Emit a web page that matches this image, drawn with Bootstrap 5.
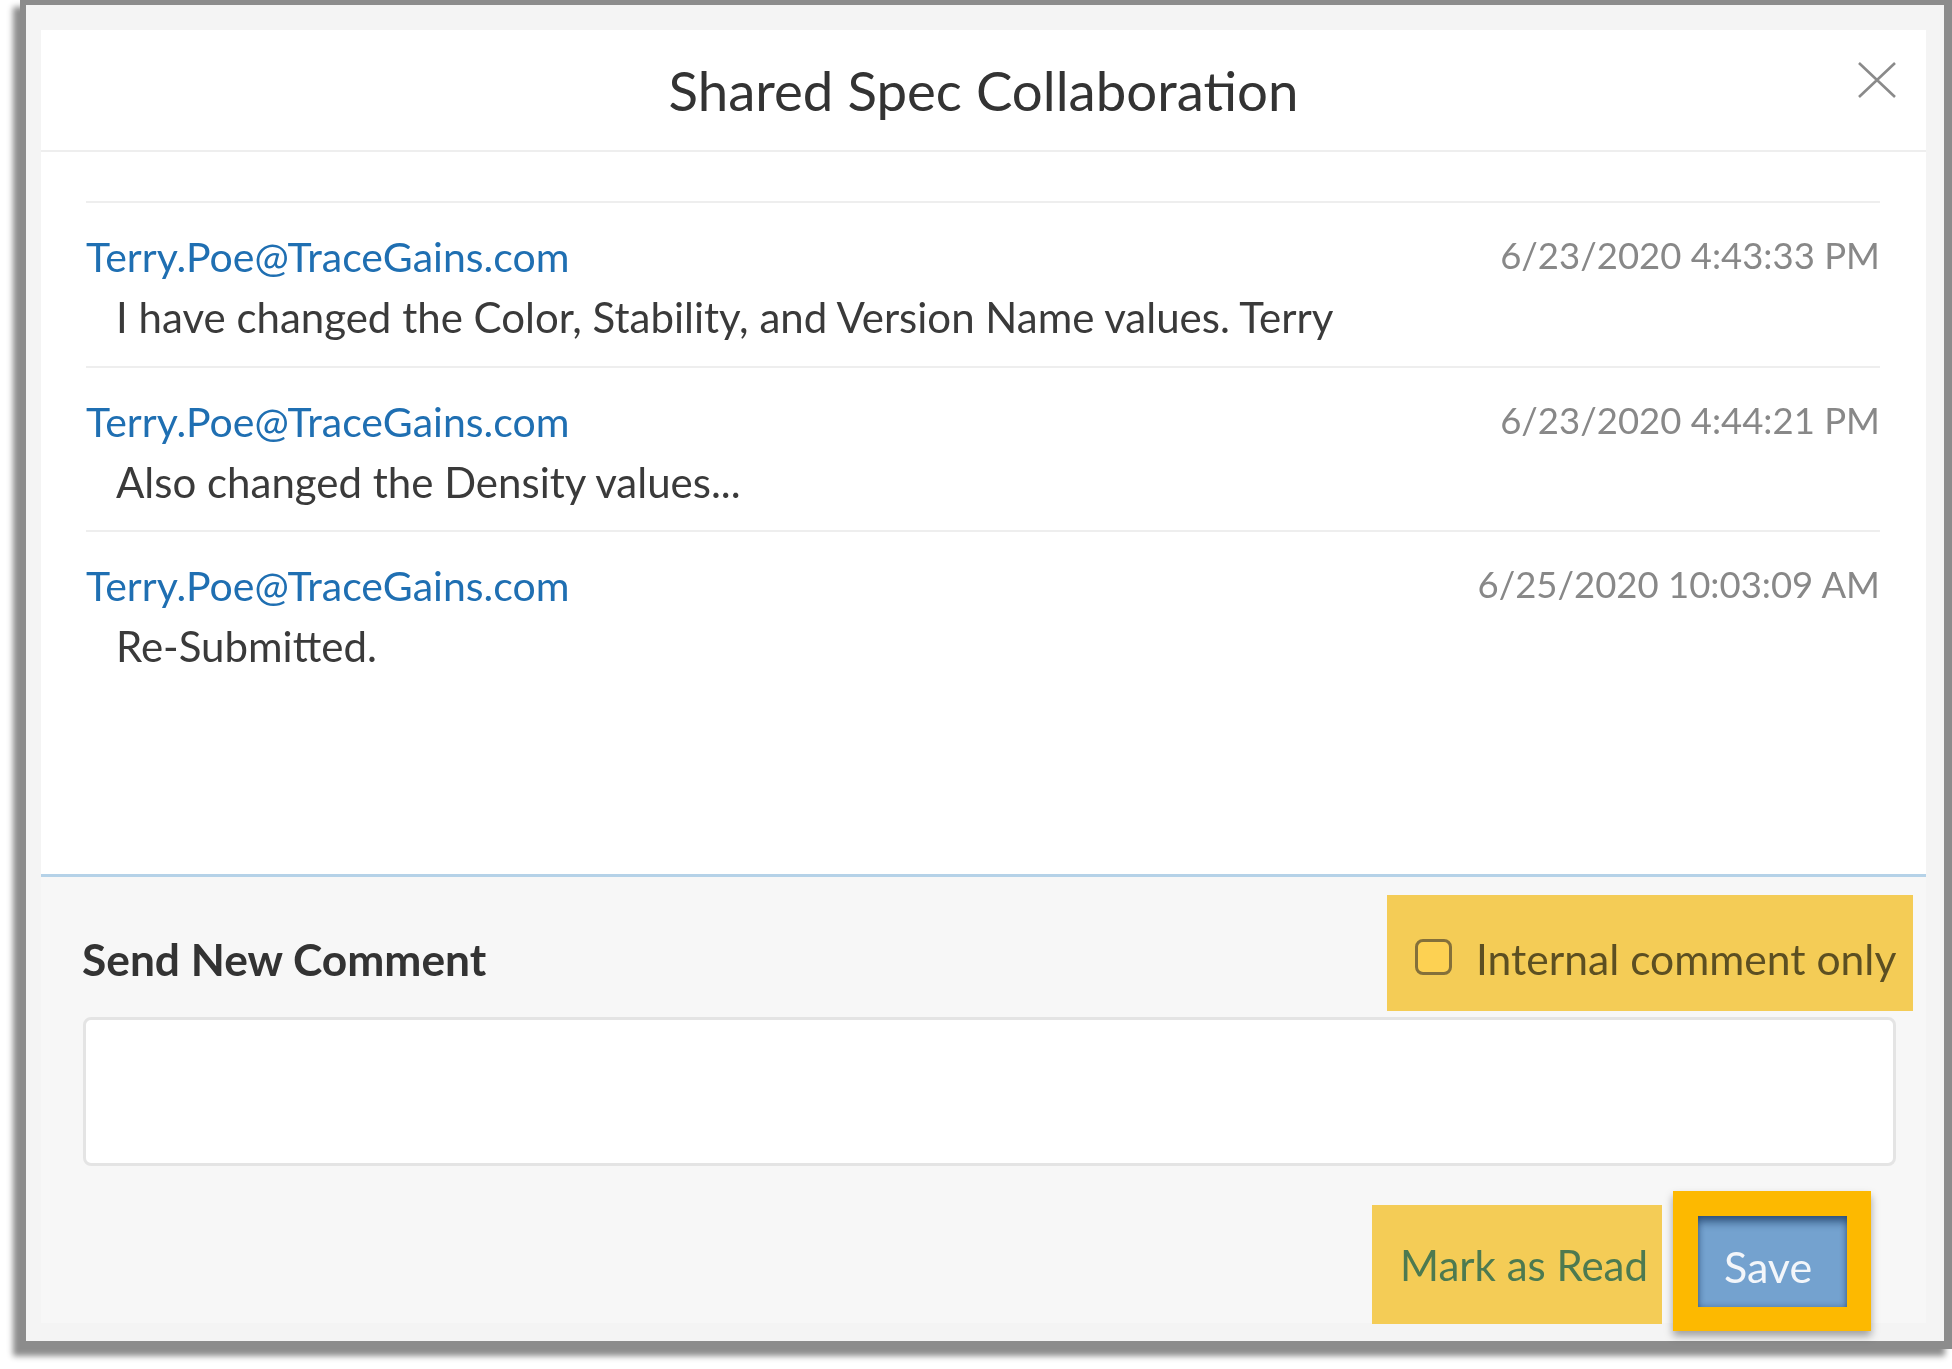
<!DOCTYPE html>
<html lang="en">
<head>
<meta charset="utf-8">
<title>Shared Spec Collaboration</title>
<link href="https://cdn.jsdelivr.net/npm/bootstrap@5.3.0/dist/css/bootstrap.min.css" rel="stylesheet">
<style>
html,body{height:100%;background:#fff;overflow:hidden}
body{font-family:Lato,"Liberation Sans",sans-serif;color:#3a3a3a;padding-left:20px}
.shot-frame{height:1349px;background:#f4f4f4;border-style:solid;border-color:#8c8c8c;border-width:5px 8px 8px 6px;padding:25px 18px 18px 15px;box-shadow:-7px 7px 6px rgba(0,0,0,.45);filter:blur(.6px)}
.dlg{height:100%;border:0;border-radius:0;background:#fff}
.dlg-head{height:122px;border-bottom:2px solid #eee;border-radius:0;padding:0 20px 0 46px;position:relative;justify-content:center}
.dlg-title{font-size:54.6px;font-weight:400;line-height:1;color:#333;margin:0;position:relative;left:-13px}
.dlg-x{position:absolute;right:30px;top:31px;width:38px;height:38px;background:none;border:0;padding:0;line-height:0}
.dlg-body{flex:1 1 auto;padding:49px 46px 0 45px}
.note{border-top:2px solid #eee;height:164.5px;padding-top:24px}
.note-from{font-size:41px;line-height:60px;color:#1f6fb2;text-decoration:none}
.note-when{font-size:36.5px;line-height:57px;color:#888}
.note-text{font-size:42px;line-height:60px;padding-left:30px;color:#3a3a3a}
.dlg-foot{display:block;flex:0 0 auto;height:449px;background:#f7f7f7;border-top:3px solid #b5d2e8;border-radius:0;padding:18px 13px 0 42px}
.foot-label{font-size:44.3px;font-weight:700;color:#333;margin:0 0 0 -1px;padding-top:12px;line-height:60px}
.flag-box{width:526px;height:116px;background:#f4cc56;padding:0 0 0 28px;gap:24px;margin:0}
.flag-box .form-check-input{width:37px;height:36px;margin:8px 0 0;float:none;background-color:#fdd152;border:3px solid #84703a;border-radius:8px;flex:none}
.flag-box label{font-size:42.6px;color:#5c4f22;line-height:60px;padding-top:12px;white-space:nowrap}
.foot-input{display:block;width:1813px;height:149px;margin-top:6px;border:3px solid #e4e4e4;border-radius:8px;background:#fff;resize:none}
.foot-actions{margin-top:25px;padding-right:42px;gap:11px}
.act-read{width:290px;height:119px;margin-top:14px;background:#f4cc56;border:0;border-radius:0;color:#4d7a50;font-size:42px;padding:0 0 0 14px;line-height:1}
.act-save{width:198px;height:140px;background:#74a2cf;border-style:solid;border-color:#fdb900;border-width:25px 24px 24px 25px;border-radius:0;color:#f3f6fa;font-size:43px;padding:9px 9px 0 0;line-height:1;box-shadow:0 5px 8px rgba(0,0,0,.35),inset 0 8px 8px -2px rgba(20,50,90,.65),inset 0 0 6px rgba(20,50,90,.4)}
</style>
</head>
<body>
<div class="shot-frame">
  <div class="modal-content dlg">
    <div class="modal-header dlg-head">
      <h1 class="dlg-title">Shared Spec Collaboration</h1>
      <button type="button" class="dlg-x" aria-label="Close">
        <svg width="38" height="38" viewBox="0 0 38 38"><path d="M1 2 L37 36 M37 2 L1 36" stroke="#8a8a8a" stroke-width="2.6" fill="none"/></svg>
      </button>
    </div>
    <div class="modal-body dlg-body">
      <div class="note">
        <div class="d-flex justify-content-between"><a href="#" class="note-from">Terry.Poe@TraceGains.com</a><span class="note-when">6/23/2020 4:43:33 PM</span></div>
        <div class="note-text">I have changed the Color, Stability, and Version Name values. Terry</div>
      </div>
      <div class="note">
        <div class="d-flex justify-content-between"><a href="#" class="note-from">Terry.Poe@TraceGains.com</a><span class="note-when">6/23/2020 4:44:21 PM</span></div>
        <div class="note-text">Also changed the Density values...</div>
      </div>
      <div class="note">
        <div class="d-flex justify-content-between"><a href="#" class="note-from">Terry.Poe@TraceGains.com</a><span class="note-when">6/25/2020 10:03:09 AM</span></div>
        <div class="note-text">Re-Submitted.</div>
      </div>
    </div>
    <div class="modal-footer dlg-foot">
      <div class="d-flex justify-content-between align-items-center">
        <p class="foot-label">Send New Comment</p>
        <div class="form-check d-flex align-items-center flag-box">
          <input class="form-check-input" type="checkbox" id="internalOnly">
          <label class="form-check-label" for="internalOnly">Internal comment only</label>
        </div>
      </div>
      <textarea class="foot-input" aria-label="New comment"></textarea>
      <div class="d-flex justify-content-end align-items-start foot-actions">
        <button type="button" class="btn act-read">Mark as Read</button>
        <button type="button" class="btn act-save">Save</button>
      </div>
    </div>
  </div>
</div>
<script src="https://cdn.jsdelivr.net/npm/bootstrap@5.3.0/dist/js/bootstrap.bundle.min.js"></script>
</body>
</html>
